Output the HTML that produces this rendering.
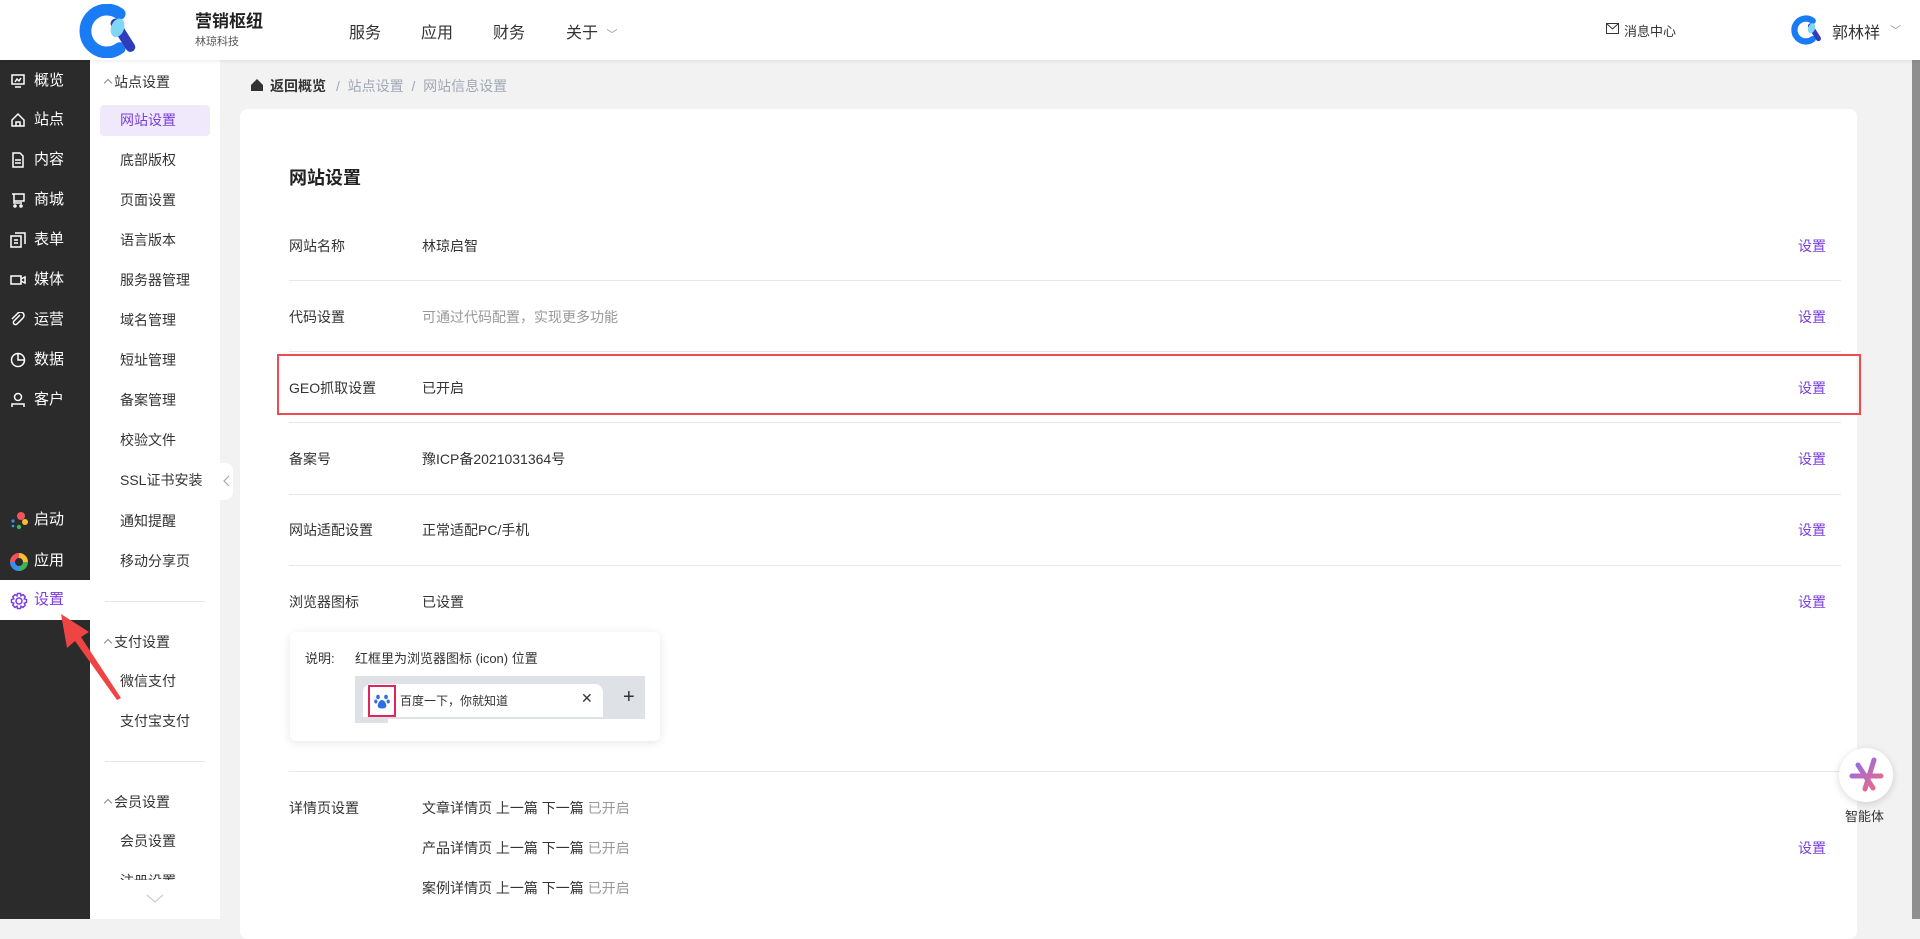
<!DOCTYPE html>
<html><head><meta charset="utf-8"><style>
*{box-sizing:border-box;margin:0;padding:0}
body{width:1920px;height:919px;overflow:hidden;background:#f2f2f3;font-family:"Liberation Sans","Noto Sans CJK SC",sans-serif;color:#333;position:relative}
.a{position:absolute;white-space:nowrap}
#hdr{position:absolute;left:0;top:0;width:1920px;height:60px;background:#fff;box-shadow:0 1px 4px rgba(0,0,0,.08);z-index:5}
.nav{font-size:16px;color:#333;top:19px}
#dark{position:absolute;left:0;top:60px;width:90px;height:859px;background:#2b2b2b}
.di{position:absolute;left:0;width:90px;height:40px;color:#fff;font-size:15px;line-height:40px}
.di span{position:absolute;left:34px}
.di svg{position:absolute;left:10px;top:12px}
#side{position:absolute;left:90px;top:60px;width:130px;height:859px;background:#fff}
.si{position:absolute;left:30px;font-size:14px;color:#333;line-height:20px}
.gh{position:absolute;left:12px;font-size:14px;color:#333}
.gh i{display:inline-block;width:6px;height:6px;border-left:1px solid #888;border-top:1px solid #888;transform:rotate(45deg);margin:0 3px 1px 3px}
.dv{position:absolute;left:15px;width:100px;height:1px;background:#e6e6e6}
#card{position:absolute;left:240px;top:109px;width:1617px;height:830px;background:#fff;border-radius:8px}
.lb{position:absolute;left:49px;font-size:14px;color:#333}
.vl{position:absolute;left:182px;font-size:14px;color:#333}
.st{position:absolute;left:1558px;font-size:14px;color:#7a3ee0}
.ln{position:absolute;left:49px;width:1552px;height:1px;background:#e8e8e8}
</style></head><body>
<div id="hdr">
 <svg class="a" style="left:79px;top:4px" width="60" height="54" viewBox="0 0 56 50">
  <path d="M38 9 A20 20 0 1 0 38 41" fill="none" stroke="#1a7cf5" stroke-width="11" stroke-linecap="round"/>
  <path d="M34 18 L48 40" stroke="#2f3dbd" stroke-width="9" stroke-linecap="round"/>
  <ellipse cx="36" cy="22" rx="6" ry="9" fill="#7fd6f7" transform="rotate(20 36 22)"/>
 </svg>
 <div class="a" style="left:195px;top:7px;font-size:17px;font-weight:bold;color:#222">营销枢纽</div>
 <div class="a" style="left:195px;top:33px;font-size:11px;color:#555">林琼科技</div>
 <div class="a nav" style="left:349px">服务</div>
 <div class="a nav" style="left:421px">应用</div>
 <div class="a nav" style="left:493px">财务</div>
 <div class="a nav" style="left:566px">关于 <span style="font-size:11px;color:#999;margin-left:4px">﹀</span></div>
 <svg class="a" style="left:1606px;top:23px" width="13" height="11" viewBox="0 0 13 11"><rect x=".5" y=".5" width="12" height="10" fill="none" stroke="#333"/><path d="M.5 .5 L6.5 6 L12.5 .5" fill="none" stroke="#333"/></svg>
 <div class="a" style="left:1624px;top:21px;font-size:13px;color:#333">消息中心</div>
 <svg class="a" style="left:1791px;top:15px" width="32" height="30" viewBox="0 0 56 50">
  <path d="M38 9 A20 20 0 1 0 38 41" fill="none" stroke="#1a7cf5" stroke-width="11" stroke-linecap="round"/>
  <path d="M34 18 L48 40" stroke="#2f3dbd" stroke-width="9" stroke-linecap="round"/>
  <ellipse cx="36" cy="22" rx="6" ry="9" fill="#7fd6f7" transform="rotate(20 36 22)"/>
 </svg>
 <div class="a" style="left:1832px;top:19px;font-size:16px;color:#333">郭林祥</div>
 <div class="a" style="left:1890px;top:22px;font-size:11px;color:#999">﹀</div>
</div>
<div class="a" style="left:1912px;top:60px;width:8px;height:859px;background:#8f8f8f"></div>

<div id="dark">
 <div class="di" style="top:1px"><svg width="16" height="16" viewBox="0 0 16 16" fill="none" stroke="#fff" stroke-width="1.5"><rect x="2" y="2" width="12" height="9"/><path d="M5 9 L7 6 L9 8 L11 5 M5 14 h6"/></svg><span>概览</span></div>
 <div class="di" style="top:40px"><svg width="16" height="16" viewBox="0 0 16 16" fill="none" stroke="#fff" stroke-width="1.5"><path d="M2 8 L8 2 L14 8 V14 H2 Z M6 14 V10 H10 V14"/></svg><span>站点</span></div>
 <div class="di" style="top:80px"><svg width="16" height="16" viewBox="0 0 16 16" fill="none" stroke="#fff" stroke-width="1.5"><path d="M3 1 H10 L13 4 V15 H3 Z M5 8 H11 M5 11 H11"/></svg><span>内容</span></div>
 <div class="di" style="top:120px"><svg width="16" height="16" viewBox="0 0 16 16" fill="none" stroke="#fff" stroke-width="1.5"><path d="M2 2 H14 V9 H4 M4 2 V11 H12"/><circle cx="5" cy="14" r="1"/><circle cx="11" cy="14" r="1"/></svg><span>商城</span></div>
 <div class="di" style="top:160px"><svg width="16" height="16" viewBox="0 0 16 16" fill="none" stroke="#fff" stroke-width="1.5"><rect x="1" y="4" width="10" height="11"/><path d="M5 1 H15 V12 M4 8 H8 M4 11 H8"/></svg><span>表单</span></div>
 <div class="di" style="top:200px"><svg width="16" height="16" viewBox="0 0 16 16" fill="none" stroke="#fff" stroke-width="1.5"><rect x="1" y="4" width="10" height="8"/><path d="M11 7 L15 5 V11 L11 9"/></svg><span>媒体</span></div>
 <div class="di" style="top:240px"><svg width="16" height="16" viewBox="0 0 16 16" fill="none" stroke="#fff" stroke-width="1.5"><path d="M10 3 L4 9 A2 2 0 0 0 7 12 L13 6 A3.5 3.5 0 0 0 8 1 L2 7"/></svg><span>运营</span></div>
 <div class="di" style="top:280px"><svg width="16" height="16" viewBox="0 0 16 16" fill="none" stroke="#fff" stroke-width="1.5"><circle cx="8" cy="8" r="6.5"/><path d="M8 1.5 V8 H14.5"/></svg><span>数据</span></div>
 <div class="di" style="top:320px"><svg width="16" height="16" viewBox="0 0 16 16" fill="none" stroke="#fff" stroke-width="1.5"><circle cx="8" cy="5" r="3.5"/><path d="M2 15 V12 H14 V15"/></svg><span>客户</span></div>
 <div class="di" style="top:440px"><svg width="18" height="18" viewBox="0 0 18 18"><circle cx="11" cy="4" r="4" fill="#f2545b"/><circle cx="15" cy="10" r="3" fill="#f5c02b"/><circle cx="9" cy="15" r="2.2" fill="#3cb455"/><circle cx="3" cy="9" r="1.6" fill="#3a8ef0"/><circle cx="3" cy="14" r="1.3" fill="#1fb4d8"/></svg><span>启动</span></div>
 <div class="di" style="top:481px"><svg width="18" height="18" viewBox="0 0 18 18" fill="none" stroke-width="5"><path d="M9 2.5 A6.5 6.5 0 0 1 15.5 9" stroke="#f5c02b"/><path d="M15.5 9 A6.5 6.5 0 0 1 9 15.5" stroke="#3cb455"/><path d="M9 15.5 A6.5 6.5 0 0 1 2.5 9" stroke="#3a8ef0"/><path d="M2.5 9 A6.5 6.5 0 0 1 9 2.5" stroke="#f2545b"/></svg><span>应用</span></div>
 <div class="di" style="top:520px;background:#fff;color:#7a3ee0"><svg width="18" height="18" viewBox="0 0 18 18" fill="none" stroke="#7a3ee0" stroke-width="1.5"><path d="M7.5 1.5 H10.5 L11 3.8 L13 2.6 L15.2 4.8 L14.2 6.8 L16.5 7.5 V10.5 L14.2 11.2 L15.2 13.2 L13 15.4 L11 14.2 L10.5 16.5 H7.5 L7 14.2 L5 15.4 L2.8 13.2 L3.8 11.2 L1.5 10.5 V7.5 L3.8 6.8 L2.8 4.8 L5 2.6 L7 3.8 Z"/><circle cx="9" cy="9" r="3"/></svg><span>设置</span></div>
</div>
<svg class="a" style="left:55px;top:612px;z-index:3" width="70" height="90" viewBox="0 0 70 90"><path d="M6 2 L34 20 L26 25 L66 86 L62 88 L20 29 L12 36 Z" fill="#ef4444"/></svg>

<div id="side">
 <div class="gh" style="top:12px"><i></i>站点设置</div>
 <div class="a" style="left:10px;top:45px;width:110px;height:31px;background:#f0e9fb;border-radius:4px"></div>
 <div class="si" style="top:50px;color:#7a3ee0">网站设置</div>
 <div class="si" style="top:90px">底部版权</div>
 <div class="si" style="top:130px">页面设置</div>
 <div class="si" style="top:170px">语言版本</div>
 <div class="si" style="top:210px">服务器管理</div>
 <div class="si" style="top:250px">域名管理</div>
 <div class="si" style="top:290px">短址管理</div>
 <div class="si" style="top:330px">备案管理</div>
 <div class="si" style="top:370px">校验文件</div>
 <div class="si" style="top:410px">SSL证书安装</div>
 <div class="si" style="top:451px">通知提醒</div>
 <div class="si" style="top:491px">移动分享页</div>
 <div class="dv" style="top:541px"></div>
 <div class="gh" style="top:572px"><i></i>支付设置</div>
 <div class="si" style="top:611px">微信支付</div>
 <div class="si" style="top:651px">支付宝支付</div>
 <div class="dv" style="top:701px"></div>
 <div class="gh" style="top:732px"><i></i>会员设置</div>
 <div class="si" style="top:771px">会员设置</div>
 <div class="si" style="top:811px;height:9px;overflow:hidden">注册设置</div>
 <svg class="a" style="left:56px;top:834px" width="18" height="10" viewBox="0 0 18 10"><path d="M1 1 L9 8 L17 1" fill="none" stroke="#ccc" stroke-width="1.2"/></svg>
</div>
<div class="a" style="left:220px;top:463px;width:13px;height:37px;background:#fff;border-radius:0 8px 8px 0"></div>
<svg class="a" style="left:222px;top:475px" width="8" height="12" viewBox="0 0 8 12"><path d="M7 1 L2 6 L7 11" fill="none" stroke="#aaa" stroke-width="1.2"/></svg>

<svg class="a" style="left:251px;top:79px" width="12" height="12" viewBox="0 0 12 12"><path d="M6 0 L12 6 V12 H0 V6 Z" fill="#333"/></svg>
<div class="a" style="left:270px;top:76px;font-size:14px;font-weight:bold;color:#333">返回概览</div>
<div class="a" style="left:336px;top:76px;font-size:14px;color:#a0a8b6">/&nbsp;&nbsp;站点设置&nbsp;&nbsp;/&nbsp;&nbsp;网站信息设置</div>

<div id="card">
 <div class="a" style="left:49px;top:55px;font-size:18px;font-weight:bold;color:#222">网站设置</div>
 <div class="lb" style="top:127px">网站名称</div><div class="vl" style="top:127px">林琼启智</div><div class="st" style="top:127px">设置</div>
 <div class="ln" style="top:171px"></div>
 <div class="lb" style="top:198px">代码设置</div><div class="vl" style="top:198px;color:#999">可通过代码配置，实现更多功能</div><div class="st" style="top:198px">设置</div>
 <div class="ln" style="top:242px"></div>
 <div class="a" style="left:37px;top:245px;width:1584px;height:61px;border:2.5px solid #ef4a4f"></div>
 <div class="lb" style="top:269px">GEO抓取设置</div><div class="vl" style="top:269px">已开启</div><div class="st" style="top:269px">设置</div>
 <div class="ln" style="top:313px"></div>
 <div class="lb" style="top:340px">备案号</div><div class="vl" style="top:340px">豫ICP备2021031364号</div><div class="st" style="top:340px">设置</div>
 <div class="ln" style="top:385px"></div>
 <div class="lb" style="top:411px">网站适配设置</div><div class="vl" style="top:411px">正常适配PC/手机</div><div class="st" style="top:411px">设置</div>
 <div class="ln" style="top:456px"></div>
 <div class="lb" style="top:483px">浏览器图标</div><div class="vl" style="top:483px">已设置</div><div class="st" style="top:483px">设置</div>
 <div class="a" style="left:50px;top:523px;width:370px;height:109px;background:#fff;border-radius:6px;box-shadow:0 2px 10px rgba(0,0,0,.1)">
  <div class="a" style="left:15px;top:16px;font-size:13px;color:#333">说明:</div>
  <div class="a" style="left:65px;top:16px;font-size:13px;color:#333">红框里为浏览器图标 (icon) 位置</div>
  <div class="a" style="left:65px;top:44px;width:290px;height:47px;background:#dee1e6"></div>
  <div class="a" style="left:73px;top:52px;width:240px;height:33px;background:#fff;border-radius:8px 8px 0 0"></div>
  <div class="a" style="left:98px;top:87px;width:257px;height:4px;background:#fff"></div>
  <div class="a" style="left:78px;top:53px;width:28px;height:32px;border:2px solid #e0245e"></div>
  <svg class="a" style="left:84px;top:61px" width="16" height="16" viewBox="0 0 16 16" fill="#2f6de5"><ellipse cx="4" cy="4" rx="1.8" ry="2.2"/><ellipse cx="12" cy="4" rx="1.8" ry="2.2"/><ellipse cx="1.8" cy="8.5" rx="1.6" ry="2"/><ellipse cx="14.2" cy="8.5" rx="1.6" ry="2"/><path d="M8 7 C5 7 3 12 4 14 C5 16 11 16 12 14 C13 12 11 7 8 7Z"/></svg>
  <div class="a" style="left:110px;top:60px;font-size:12px;color:#333">百度一下，你就知道</div>
  <div class="a" style="left:291px;top:58px;font-size:14px;color:#333">✕</div>
  <div class="a" style="left:333px;top:54px;font-size:20px;color:#333">+</div>
 </div>
 <div class="ln" style="top:662px"></div>
 <div class="lb" style="top:689px">详情页设置</div>
 <div class="vl" style="top:689px">文章详情页 上一篇 下一篇 <span style="color:#999">已开启</span></div>
 <div class="vl" style="top:729px">产品详情页 上一篇 下一篇 <span style="color:#999">已开启</span></div>
 <div class="vl" style="top:769px">案例详情页 上一篇 下一篇 <span style="color:#999">已开启</span></div>
 <div class="st" style="top:729px">设置</div>
</div>

<div class="a" style="left:1839px;top:748px;width:54px;height:54px;border-radius:50%;background:#fff;box-shadow:0 2px 8px rgba(0,0,0,.15)"></div>
<svg class="a" style="left:1844px;top:753px" width="44" height="44" viewBox="0 0 44 44">
 <defs><linearGradient id="g" gradientUnits="userSpaceOnUse" x1="8" y1="6" x2="36" y2="38"><stop offset="0" stop-color="#8a6cf0"/><stop offset="1" stop-color="#f46a7e"/></linearGradient></defs>
 <g stroke="url(#g)" stroke-width="5" stroke-linecap="round"><path d="M30 7 L21 36"/><path d="M8 23 H37"/><path d="M14 12 L29 35"/></g>
</svg>
<div class="a" style="left:1845px;top:806px;font-size:13px;color:#333">智能体</div>
</body></html>
